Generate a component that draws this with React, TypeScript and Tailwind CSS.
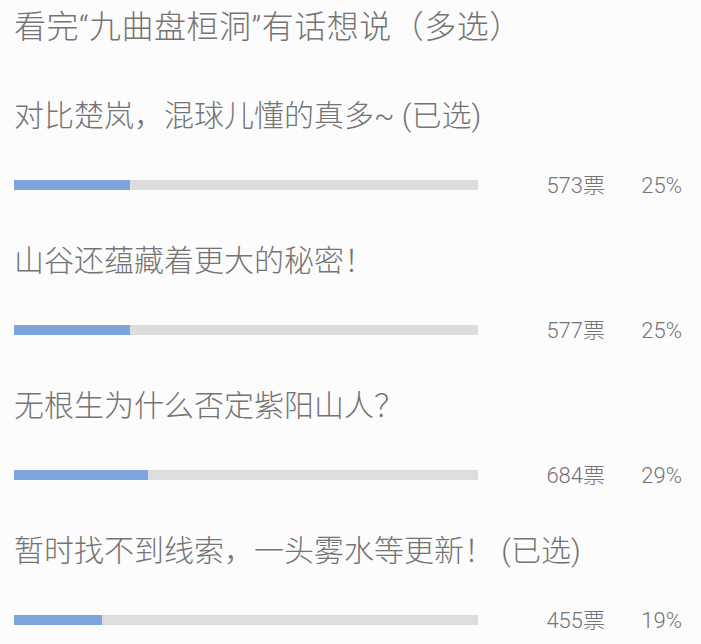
const OPTIONS = [
  { text: "对比楚岚，混球儿懂的真多~ (已选)", votes: 573, pct: 25, fill: 116 },
  { text: "山谷还蕴藏着更大的秘密！", votes: 577, pct: 25, fill: 116 },
  { text: "无根生为什么否定紫阳山人？", votes: 684, pct: 29, fill: 134 },
  { text: "暂时找不到线索，一头雾水等更新！ (已选)", votes: 455, pct: 19, fill: 88 },
];

export default function App() {
  return (
    <div
      className="h-[644px] w-[701px] overflow-hidden bg-[#fcfcfc] pl-[14px] pt-[7px] text-[#747474]"
      style={{ fontFamily: "Roboto, 'Noto Sans CJK SC', sans-serif" }}
    >
      <h1 className="text-[32px] leading-[40px] font-light tracking-[0.5px]">
        看完“九曲盘桓洞”有话想说（多选）
      </h1>

      {OPTIONS.map((o, i) => (
        <div key={i} className={i === 0 ? "mt-[49px]" : "mt-[41px]"}>
          <div className="text-[30px] leading-[40px] font-light">{o.text}</div>
          <div className="mt-[34px] flex h-[30px] items-center">
            <div className="h-[10px] w-[464px] bg-[#dddddd]">
              <div className="h-full bg-[#7ba5dc]" style={{ width: o.fill }} />
            </div>
            <div className="w-[127px] text-right text-[22px] font-light">{o.votes}票</div>
            <div className="w-[77px] text-right text-[22px] font-light">{o.pct}%</div>
          </div>
        </div>
      ))}
    </div>
  );
}
